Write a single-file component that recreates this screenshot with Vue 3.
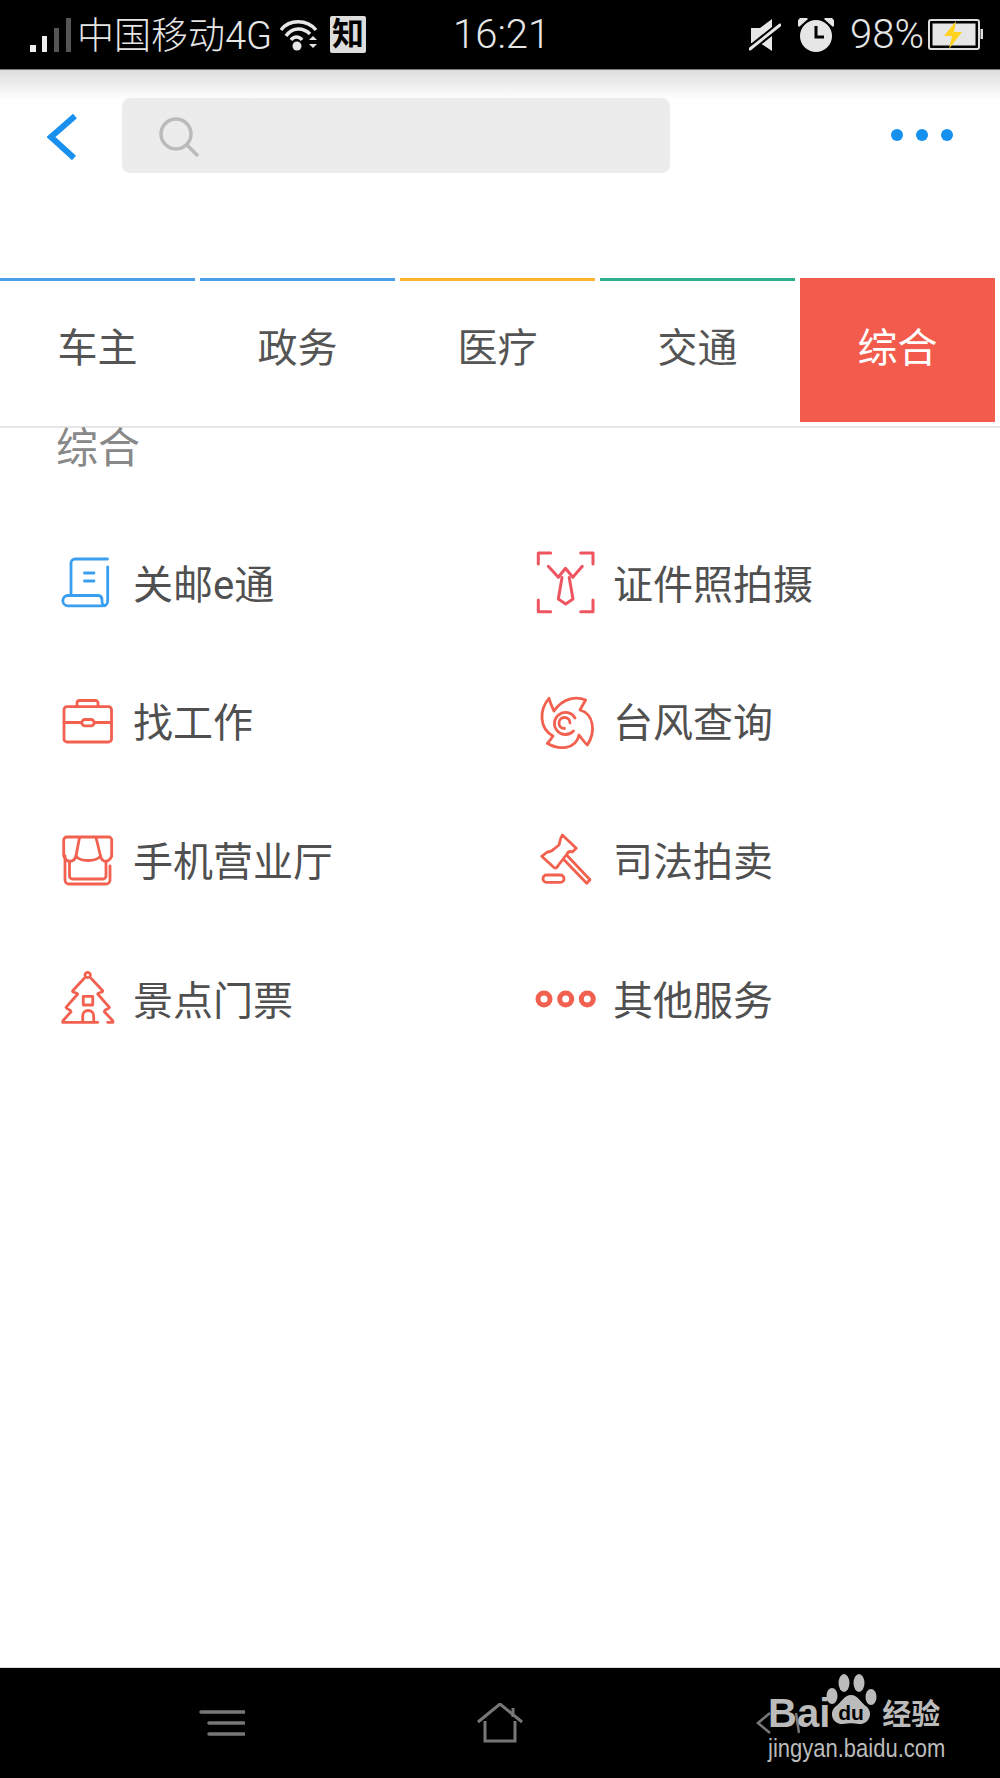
<script setup>
const tabs = [
  { name: '车主', color: '#4b9fe8' },
  { name: '政务', color: '#4b9fe8' },
  { name: '医疗', color: '#fbb32c' },
  { name: '交通', color: '#2fae8e' },
  { name: '综合', active: true }
];

const red = '#f2604f';

// icon paths are drawn on a 60x60 box centred on the row
const services = [
  {
    name: '关邮e通',
    color: '#3a9ff0',
    paths: [
      'M51.5 6H19a4 4 0 0 0-4 4V42.5',
      'M42 42.5H12a5 5 0 0 0 0 10.3H47a4.7 4.7 0 0 0 4.7-4.7V14',
      'M42 42.5c3 0 4 2 4 5s1 5.3 3 5.3',
      'M28.5 20H38',
      'M28.5 28H38'
    ]
  },
  {
    name: '证件照拍摄',
    color: '#ef5560',
    paths: [
      'M2.3 11V0H14.7', 'M44.7 0H57V11', 'M2.3 47V58.7H14.7', 'M44.7 58.7H57V47',
      'M12.3 13.3L22.3 24.3L29.5 15.3L36.8 24.3L46.3 13.3',
      'M26 24.5L22.3 46L29.7 51L37 46L33.2 24.5'
    ],
    width: 3
  },
  {
    name: '找工作',
    color: red,
    paths: [
      'M11 14.7H52.5a3 3 0 0 1 3 3V47a3 3 0 0 1-3 3H11a3 3 0 0 1-3-3V17.7a3 3 0 0 1 3-3Z',
      'M21 14.7V11a2.5 2.5 0 0 1 2.5-2.5H39.5A2.5 2.5 0 0 1 42 11V14.7',
      'M8 30.5H25.5', 'M38 30.5H55.5',
      'M29 27.5H35a3.2 3.2 0 0 1 0 6.4H29a3.2 3.2 0 0 1 0-6.4Z'
    ]
  },
  {
    name: '台风查询',
    color: red,
    paths: [
      'M49.7 8C40 4 27 6 18 19C16 15 14 10 13 6.300C3 18 3 36 17 44C15 47 13 50 11.300 51.300C22 58 40 58 43 43C46 47 49 51 51.300 53C60 40 58 22 44 18C46 14 48 11 49.700 8Z',
      'M39 26A11 11 0 1 0 37.500 39',
      'M34 31A5.500 5.500 0 1 0 28.500 36.500'
    ]
  },
  {
    name: '手机营业厅',
    color: red,
    paths: [
      'M7.700 25V9a3 3 0 0 1 3-3H52.700a3 3 0 0 1 3 3V25',
      'M23.500 6.500L20 25', 'M40 6.500L44.500 25',
      'M8 25C10 32 18 32 20 25C24 31 40 31 44.500 25C46 32 53 32 55.700 25',
      'M9 25V49a4 4 0 0 0 4 4H50a4 4 0 0 0 4-4V35',
      'M13.500 31V45a3 3 0 0 0 3 3H47a3 3 0 0 0 3-3V32'
    ]
  },
  {
    name: '司法拍卖',
    color: red,
    paths: [
      'M26.300 4L40.300 17.300L36.300 21C34 20 32 21 31 23L22.500 34C21.500 36 20 38 18 36.500L5.700 25.300L11.300 21C14 21 16 20 18 18L23 14C24 11 24 7 26.300 4Z',
      'M31.300 24.700L54 48.700L50.700 52.300L28 28.700',
      'M10.600 44H24.400a3.600 3.600 0 0 1 0 7.300H10.600a3.600 3.600 0 0 1 0-7.300Z'
    ]
  },
  {
    name: '景点门票',
    color: red,
    paths: [
      'M31.700 3.300a2.700 2.700 0 1 1-.01 0Z',
      'M28.300 9.300L16.700 21.700C16 24 21 23 21.700 25L10 38.300C11 41 15 40 15 42.700L7 51.700',
      'M35 9.300L46.700 21.700C47 24 42 23 41.700 25L53.400 38.300C52 41 48 40 48.400 42.700L56.700 51.700',
      'M6.700 53.300H41.700', 'M51.700 53.300H57',
      'M27.300 27.300H36.700V36H27.300Z',
      'M26.700 53V47a5.500 5.500 0 0 1 11 0V53'
    ]
  },
  {
    name: '其他服务',
    color: red,
    paths: [
      'M2 30a6 6 0 1 0 12 0a6 6 0 1 0-12 0Z',
      'M23.700 30a6 6 0 1 0 12 0a6 6 0 1 0-12 0Z',
      'M45.300 30a6 6 0 1 0 12 0a6 6 0 1 0-12 0Z'
    ],
    width: 5
  }
];
</script>

<template>
  <div class="page">
    <div class="status">
      <svg class="signal" width="41" height="34" viewBox="0 0 41 34">
        <rect x="0" y="27" width="6" height="7" fill="#eee" />
        <rect x="12" y="18" width="5" height="16" fill="#eee" />
        <rect x="24" y="10" width="5" height="24" fill="#555" />
        <rect x="36" y="0" width="5" height="34" fill="#555" />
      </svg>
      <span class="carrier">中国移动<span class="latin">4G</span></span>
      <svg class="wifi" width="38" height="32" viewBox="0 0 38 32" fill="none" stroke="#e6e6e6" stroke-width="3.500">
        <path d="M1 11C9 0 27 0 36 11" />
        <path d="M6 17C12 8 23 8 30 15" />
        <path d="M11 21C14 17 19 17 22 21" />
        <circle cx="17" cy="27" r="4.500" fill="#e6e6e6" stroke="none" />
        <path d="M33 17L29 21H37Z M33 29L29 25H37Z" fill="#e6e6e6" stroke="none" />
      </svg>
      <span class="badge">知</span>
      <span class="time">16:21</span>
      <div class="status-right">
        <svg width="32" height="34" viewBox="0 0 32 34">
          <path d="M2 10H11L23 1V33L11 25H2Z" fill="#e6e6e6" />
          <path d="M1 31L31 7" stroke="#000" stroke-width="7" />
          <path d="M1 31L31 7" stroke="#e6e6e6" stroke-width="3" stroke-linecap="round" />
        </svg>
        <svg class="alarm" width="36" height="34" viewBox="0 0 36 34">
          <circle cx="18" cy="18" r="16" fill="#e6e6e6" />
          <path d="M18 8V19H26" fill="none" stroke="#000" stroke-width="3" />
          <path d="M1 9A6 6 0 0 1 10 1Z" fill="#e6e6e6" />
          <path d="M35 9A6 6 0 0 0 26 1Z" fill="#e6e6e6" />
        </svg>
        <span class="percent">98%</span>
        <svg class="battery" width="55" height="31" viewBox="0 0 55 31">
          <rect x="1" y="1" width="50" height="29" rx="2" fill="#000" stroke="#ddd" stroke-width="2" />
          <rect x="4.500" y="4.500" width="43" height="22" fill="#e6e6e6" />
          <rect x="52.500" y="10" width="2.500" height="10" fill="#ddd" />
          <path d="M28 2L16 17H24L21 30L34 13H26Z" fill="#ffd21f" />
        </svg>
      </div>
    </div>

    <div class="header">
      <svg class="back" width="30" height="46" viewBox="0 0 30 46" fill="none" stroke="#1a90ee" stroke-width="6">
        <path d="M28 2L4 23L27 44" />
      </svg>
      <div class="search">
        <svg width="42" height="42" viewBox="0 0 42 42" fill="none" stroke="#bbb" stroke-width="3.500">
          <circle cx="17" cy="17" r="15" />
          <path d="M28 28L39 39" />
        </svg>
      </div>
      <div class="more">
        <i></i><i></i><i></i>
      </div>
    </div>

    <div class="tabs">
      <div
        v-for="tab in tabs"
        :key="tab.name"
        :class="['tab', { active: tab.active }]"
        :style="tab.color ? { borderTopColor: tab.color } : null"
      >
        {{ tab.name }}
      </div>
    </div>

    <div class="content">
      <div class="title">综合</div>
      <div class="list">
        <div v-for="item in services" :key="item.name" class="row">
          <svg
            class="icon"
            width="60"
            height="60"
            viewBox="0 0 60 60"
            fill="none"
            stroke-linecap="round"
            stroke-linejoin="round"
            :stroke="item.color"
            :stroke-width="item.width || 2.800"
          >
            <path v-for="d in item.paths" :key="d" :d="d" />
          </svg>
          <span class="label">{{ item.name }}</span>
        </div>
      </div>
    </div>

    <div class="navbar">
      <svg width="46" height="26" viewBox="0 0 46 26" fill="none" stroke="#777" stroke-width="3.500" stroke-linecap="round">
        <path d="M2 2H45" />
        <path d="M10 13H45" />
        <path d="M10 24H45" />
      </svg>
      <svg width="46" height="40" viewBox="0 0 46 40" fill="none" stroke="#777" stroke-width="3">
        <path d="M1 19L23 1L45 19" />
        <path d="M8 18V38H38V18" />
        <path d="M36 5V14" />
      </svg>
      <svg width="44" height="24" viewBox="0 0 44 24" fill="none" stroke="#777" stroke-width="2.500">
        <path d="M14 2L2 12L14 22" />
        <path d="M40 2L43 22" />
      </svg>

      <div class="watermark">
        <div class="wm-top">
          <span class="wm-bai">Bai</span>
          <svg class="wm-paw" width="52" height="54" viewBox="0 0 52 54">
            <ellipse cx="7" cy="22" rx="5.500" ry="8" fill="#bbb" />
            <ellipse cx="19" cy="9" rx="5.500" ry="9" fill="#bbb" />
            <ellipse cx="34" cy="9" rx="5.500" ry="9" fill="#bbb" />
            <ellipse cx="46" cy="23" rx="5.500" ry="8" fill="#bbb" />
            <path d="M26 21C33 21 35 28 42 33C49 40 43 51 34 50C29 49 23 49 18 50C9 51 3 40 10 33C17 28 19 21 26 21Z" fill="#bbb" />
            <text x="26" y="46" text-anchor="middle" font-size="21" font-weight="700" fill="#000" font-family="'Liberation Sans', sans-serif">du</text>
          </svg>
          <span class="wm-cn">经验</span>
        </div>
        <div class="wm-url">jingyan.baidu.com</div>
      </div>
    </div>
  </div>
</template>

<style scoped>
.page {
  position: relative;
  width: 1000px;
  height: 1778px;
  display: flex;
  flex-direction: column;
  background: #fff;
  overflow: hidden;
  font-family: Roboto, 'Noto Sans CJK SC', sans-serif;
}

.status {
  flex: none;
  height: 69px;
  display: flex;
  align-items: center;
  padding: 0 17px 0 30px;
  background: #000;
  border-bottom: 1px solid #777;
  color: #e6e6e6;
  font-size: 40px;
  font-weight: 300;
}

.carrier {
  margin-left: 6px;
  font-size: 37px;
  white-space: nowrap;
  line-height: 72px;
  height: 69px;
}

.latin {
  font-size: 38px;
}

.wifi {
  margin-left: 8px;
}

.badge {
  width: 36px;
  height: 37px;
  margin-left: 12px;
  border-radius: 2px;
  background: #ddd;
  color: #000;
  font-size: 32px;
  font-weight: 700;
  line-height: 36px;
  text-align: center;
}

.time {
  margin-left: 87px;
}

.status-right {
  margin-left: auto;
  display: flex;
  align-items: center;
}

.alarm {
  margin-left: 17px;
}

.percent {
  margin-left: 16px;
}

.battery {
  margin-left: 4px;
}

.header {
  flex: none;
  height: 208px;
  box-sizing: border-box;
  display: flex;
  align-items: flex-start;
  padding-top: 28px;
  background: linear-gradient(#dedede 0, #fff 30px);
}

.back {
  margin: 16px 0 0 47px;
}

.search {
  width: 548px;
  height: 75px;
  margin-left: 45px;
  padding: 19px 0 0 37px;
  box-sizing: border-box;
  border-radius: 8px;
  background: #ececec;
}

.more {
  margin: 31px 0 0 221px;
  display: flex;
  gap: 13px;
}

.more i {
  width: 12px;
  height: 12px;
  border-radius: 50%;
  background: #1690ee;
}

.tabs {
  flex: none;
  display: grid;
  grid-template-columns: repeat(5, 195px);
  gap: 5px;
  padding-bottom: 4px;
  border-bottom: 2px solid #e6e6e6;
}

.tab {
  height: 144px;
  box-sizing: border-box;
  border-top: 3px solid transparent;
  padding-bottom: 14px;
  display: flex;
  align-items: center;
  justify-content: center;
  color: #555;
  font-size: 40px;
}

.tab.active {
  background: #f35b4c;
  color: #fff;
}

.content {
  flex: 1;
}

.title {
  height: 42px;
  padding-left: 56px;
  color: #888;
  font-size: 42px;
  line-height: 42px;
}

.list {
  margin-top: 44px;
  padding-left: 56px;
  display: grid;
  grid-template-columns: repeat(2, 480px);
  grid-auto-rows: 138.67px;
}

.row {
  display: flex;
  align-items: center;
  gap: 17px;
  color: #505050;
  font-size: 40px;
}

.label {
  margin-bottom: 3px;
}

.icon {
  flex: none;
  overflow: visible;
}

.navbar {
  position: relative;
  flex: none;
  height: 110px;
  display: grid;
  grid-template-columns: repeat(3, 278px);
  justify-content: center;
  justify-items: center;
  align-items: center;
  border-top: 1px solid #ddd;
  background: #000;
}

.watermark {
  position: absolute;
  top: 6px;
  left: 768px;
  width: 190px;
  color: #bbb;
}

.wm-top {
  display: flex;
  align-items: flex-end;
  height: 62px;
}

.wm-bai {
  font-family: 'Liberation Sans', sans-serif;
  font-size: 40px;
  font-weight: 700;
  line-height: 46px;
}

.wm-paw {
  flex: none;
  align-self: flex-start;
  margin-left: -5px;
}

.wm-cn {
  flex: none;
  margin-left: 5px;
  font-size: 29px;
  font-weight: 700;
  line-height: 42px;
  white-space: nowrap;
}

.wm-url {
  margin-top: -3px;
  font-family: 'Liberation Sans', sans-serif;
  font-size: 25px;
  line-height: 30px;
  white-space: nowrap;
  transform: scaleX(0.88);
  transform-origin: left;
}
</style>
